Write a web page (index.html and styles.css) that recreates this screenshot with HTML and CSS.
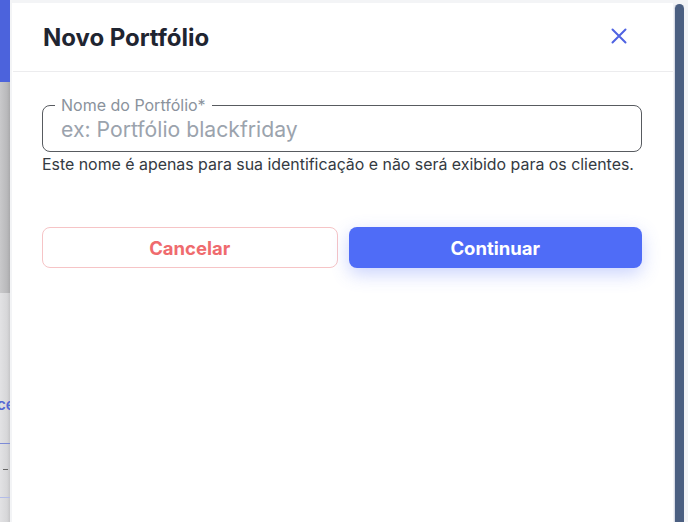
FILE: index.html
```html
<!DOCTYPE html>
<html lang="pt-BR">
<head>
<meta charset="utf-8">
<title>Novo Portfólio</title>
<link rel="stylesheet" href="styles.css">
</head>
<body>
<div class="screen">
  <aside class="behind">
    <div class="behind-top"></div>
    <div class="behind-mid"></div>
    <div class="behind-low">
      <span class="frag-text">ce</span>
      <span class="frag-line"></span>
      <span class="frag-dash"></span>
      <span class="frag-line pale"></span>
    </div>
  </aside>

  <section class="modal">
    <header class="modal-head">
      <h1 class="modal-title">Novo Portfólio</h1>
      <button class="close-btn" aria-label="Fechar">
        <svg width="16" height="16" viewBox="0 0 16 16"><path d="M1.5 1.5 L14.5 14.5 M14.5 1.5 L1.5 14.5" stroke="#4f63e2" stroke-width="2" stroke-linecap="round" fill="none"/></svg>
      </button>
    </header>
    <div class="modal-body">
      <fieldset class="field">
        <legend class="field-label">Nome do Portfólio*</legend>
        <input class="field-input" type="text" placeholder="ex: Portfólio blackfriday">
      </fieldset>
      <p class="helper">Este nome é apenas para sua identificação e não será exibido para os clientes.</p>
      <div class="actions">
        <button class="btn btn-cancel">Cancelar</button>
        <button class="btn btn-primary">Continuar</button>
      </div>
    </div>
  </section>

  <div class="rail"><div class="thumb"></div></div>
</div>
</body>
</html>
```
FILE: styles.css
```css
* { box-sizing: border-box; }
html, body { margin: 0; padding: 0; }
body {
  font-family: Inter, "Noto Sans", "Liberation Sans", sans-serif;
  background: #f3f4f6;
  overflow: hidden;
}
.screen {
  display: flex;
  height: 522px;
  width: 688px;
}
.behind {
  width: 10px;
  display: flex;
  flex-direction: column;
}
.behind-top { height: 82px; background: #4c63dc; }
.behind-mid {
  height: 211px;
  background: linear-gradient(90deg, #c9c9cb 0%, #b9b9bb 70%, #a9a9ab 100%);
}
.behind-low {
  flex: 1;
  background: linear-gradient(90deg, #e2e2e4 0%, #d7d7d9 70%, #c6c6c8 100%);
  display: flex;
  flex-direction: column;
  padding-top: 103px;
  overflow: hidden;
}
.frag-text {
  color: #5468d4;
  font-size: 15px;
  font-weight: 600;
  line-height: 18px;
  margin-left: -3px;
  white-space: nowrap;
}
.frag-line { display: block; height: 1px; background: #7d8bd6; margin-top: 29px; }
.frag-dash { display: block; width: 5px; height: 1px; background: #666; margin: 25px 0 0 3px; }
.frag-line.pale { background: #b3bce8; margin-top: 27px; }

.modal {
  flex: 1;
  margin: 3px 0 0 2px;
  background: #ffffff;
  display: flex;
  flex-direction: column;
}
.modal-head {
  height: 69px;
  border-bottom: 1px solid #ececee;
  display: flex;
  align-items: center;
  justify-content: space-between;
  padding: 0 46px 0 30px;
  margin-left: 1px;
}
.modal-title {
  margin: 0;
  font-size: 24px;
  font-weight: 700;
  color: #1f2531;
  letter-spacing: -0.05px;
}
.close-btn {
  border: 0;
  background: transparent;
  padding: 0;
  width: 16px;
  height: 16px;
  display: flex;
  margin-top: -3px;
}
.modal-body {
  padding: 24px 31px 0 30px;
}
.field {
  margin: 0;
  border: 1px solid #585b60;
  border-radius: 8px;
  padding: 0 18px 0 18px;
  height: 56px;
}
.field-label {
  margin-left: -6px;
  padding: 0 6px;
  font-size: 16px;
  line-height: 18px;
  color: #8a929c;
}
.field-input {
  display: block;
  width: 100%;
  border: 0;
  outline: none;
  padding: 0;
  margin-top: -3px;
  height: 36px;
  font-family: inherit;
  font-size: 21.2px;
  color: #333;
  background: transparent;
}
.field-input::placeholder { color: #9ba3ad; }
.helper {
  margin: 3px 0 0 0;
  font-size: 15.9px;
  line-height: 20px;
  color: #343a42;
  white-space: nowrap;
}
.actions {
  display: flex;
  gap: 11px;
  margin-top: 52px;
}
.btn {
  flex: 1;
  height: 41px;
  border-radius: 8px;
  font-family: inherit;
  font-size: 18.5px;
  font-weight: 700;
  cursor: pointer;
}
.btn-cancel {
  background: #fff;
  border: 1px solid #f6c4c6;
  color: #ef6b6e;
}
.btn-primary {
  background: #4f6cf7;
  border: 0;
  color: #fff;
  box-shadow: 0 6px 18px rgba(79, 108, 247, 0.3);
}
.rail {
  width: 15px;
  padding: 4px 4px 0 2px;
  background: #f3f4f6;
}
.thumb {
  height: 100%;
  background: #4b5f81;
  border-radius: 5px 5px 0 0;
  box-shadow: -1px 0 0 #d8dbe6;
}
```
